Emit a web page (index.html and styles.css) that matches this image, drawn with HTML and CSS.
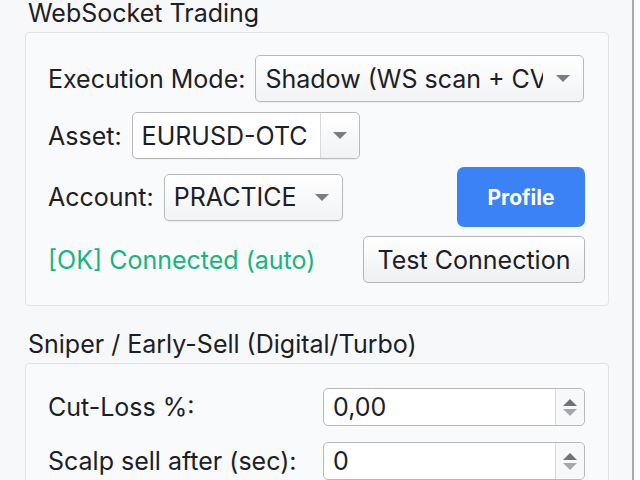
FILE: index.html
```html
<!DOCTYPE html>
<html lang="en">
<head>
  <meta charset="UTF-8" />
  <title>WebSocket Trading</title>
  <link rel="stylesheet" href="styles.css">
</head>
<body>
<div class="panel">
  <div class="group-title">WebSocket Trading</div>
  <div class="group ws-group">
    <div class="row">
      <span class="label">Execution Mode:</span>
      <div class="combo mode-combo"><span class="combo-text">Shadow (WS scan + CV scan)</span><span class="arrow"></span></div>
    </div>
    <div class="row">
      <span class="label">Asset:</span>
      <div class="combo asset-combo"><span class="combo-text">EURUSD-OTC</span><span class="arrow-box"><span class="arrow"></span></span></div>
    </div>
    <div class="row">
      <span class="label">Account:</span>
      <div class="combo account-combo"><span class="combo-text">PRACTICE</span><span class="arrow"></span></div>
      <button class="btn-primary">Profile</button>
    </div>
    <div class="row">
      <span class="label status-ok">[OK] Connected (auto)</span>
      <button class="btn">Test Connection</button>
    </div>
  </div>

  <div class="group-title second">Sniper / Early-Sell (Digital/Turbo)</div>
  <div class="group sniper-group">
    <div class="form-row">
      <span class="label">Cut-Loss %:</span>
      <div class="spin"><span class="spin-text">0,00</span><span class="spin-btns"><span class="up"></span><span class="down"></span></span></div>
    </div>
    <div class="form-row">
      <span class="label">Scalp sell after (sec):</span>
      <div class="spin"><span class="spin-text">0</span><span class="spin-btns"><span class="up"></span><span class="down"></span></span></div>
    </div>
  </div>
</div>
</body>
</html>
```

FILE: styles.css
```css
body {
  margin: 0;
  background: #fdfdfe;
  font-family: "Inter", "Liberation Sans", sans-serif;
  color: #1c2026;
  font-size: 25px;
  overflow: hidden;
}
.panel {
  width: 632px;
  height: 480px;
  background: #f7f8fa;
  border-right: 2px solid #a9a9ab;
  overflow: hidden;
}
.group-title {
  padding-left: 28px;
  height: 32px;
  line-height: 26px;
  white-space: nowrap;
}
.group-title.second {
  margin-top: 25px;
}
.group {
  margin: 0 23px 0 25px;
  border: 1px solid #e1e3e7;
  border-radius: 4px;
  background: #f9fafb;
  padding: 22px 24px 22px 22px;
}
.ws-group {
  height: 228px;
}
.row {
  display: flex;
  align-items: center;
  margin-bottom: 9px;
}
.row:first-child {
  margin-bottom: 10px;
}
.row:nth-child(2) {
  margin-bottom: 8px;
}
.label {
  margin-right: 10px;
  white-space: nowrap;
}
.status-ok {
  color: #15b57f;
}
.combo {
  display: flex;
  align-items: center;
  height: 47px;
  border: 1px solid #b9b9bb;
  border-radius: 5px;
  background: linear-gradient(#ffffff, #f2f3f5);
  box-sizing: border-box;
  box-shadow: 0 1px 1px rgba(0, 0, 0, 0.06);
}
.combo-text {
  padding-left: 9px;
  flex: 1;
  overflow: hidden;
  white-space: nowrap;
}
.arrow {
  flex: none;
  width: 0;
  height: 0;
  border-left: 7px solid transparent;
  border-right: 7px solid transparent;
  border-top: 7px solid #7b7d82;
  margin: 0 13px 0 13px;
}
.mode-combo {
  width: 329px;
}
.asset-combo {
  width: 228px;
  background: #fff;
}
.arrow-box {
  height: 100%;
  display: flex;
  align-items: center;
  border-left: 1px solid #d8d9dc;
  background: linear-gradient(#ffffff, #f1f2f4);
  border-radius: 0 5px 5px 0;
}
.arrow-box .arrow {
  margin: 0 12px 0 12px;
}
.account-combo {
  width: 179px;
}
.btn-primary {
  margin-left: auto;
  margin-right: -1px;
  width: 128px;
  height: 60px;
  border: none;
  border-radius: 7px;
  background: #3b82f6;
  color: #fff;
  font-family: inherit;
  font-size: 21px;
  font-weight: bold;
}
.btn {
  margin-left: auto;
  margin-right: -1px;
  width: 222px;
  height: 47px;
  border: 1px solid #b4b5b8;
  border-radius: 5px;
  background: linear-gradient(#ffffff, #eff0f2);
  color: #1c2026;
  font-family: inherit;
  font-size: 25px;
  padding: 0;
}
.sniper-group {
  padding-top: 24px;
  height: 200px;
}
.form-row {
  display: grid;
  grid-template-columns: 275px 262px;
  align-items: center;
  margin-bottom: 16px;
}
.spin {
  display: flex;
  height: 38px;
  border: 1px solid #b9b9bb;
  border-radius: 5px;
  background: #fff;
  box-sizing: border-box;
}
.spin-text {
  flex: 1;
  padding-left: 9px;
  line-height: 36px;
}
.spin-btns {
  width: 28px;
  border-left: 1px solid #d8d9dc;
  display: flex;
  flex-direction: column;
  align-items: center;
  justify-content: center;
  gap: 3px;
  background: #f7f8f9;
  border-radius: 0 5px 5px 0;
}
.up {
  border-left: 7px solid transparent;
  border-right: 7px solid transparent;
  border-bottom: 7px solid #6f7277;
}
.down {
  border-left: 7px solid transparent;
  border-right: 7px solid transparent;
  border-top: 7px solid #a5a7ab;
}
```
